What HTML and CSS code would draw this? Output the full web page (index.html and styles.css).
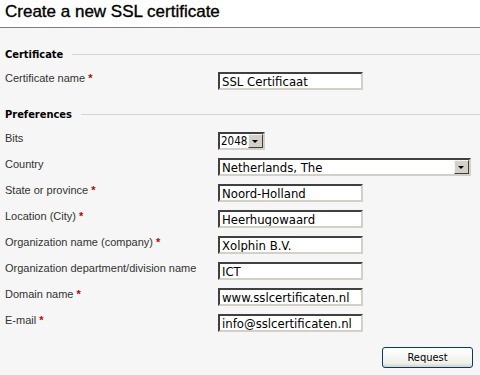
FILE: index.html
```html
<!DOCTYPE html>
<html lang="en">
<head>
    <meta charset="UTF-8">
    <meta name="viewport" content="width=device-width, initial-scale=1.0">
    <title>Create a new SSL certificate</title>
    <link rel="stylesheet" href="styles.css">
</head>
<body>
    <div class="header">
        <h1>Create a new SSL certificate</h1>
    </div>

    <form class="content">
        <div class="legend"><span>Certificate</span></div>
        <div class="row">
            <label>Certificate name <em>*</em></label>
            <input class="text" type="text" value="SSL Certificaat">
        </div>

        <div class="legend"><span>Preferences</span></div>
        <div class="row">
            <label>Bits</label>
            <div class="select small"><span>2048</span><i></i></div>
        </div>
        <div class="row">
            <label>Country</label>
            <div class="select wide"><span>Netherlands, The</span><i></i></div>
        </div>
        <div class="row">
            <label>State or province <em>*</em></label>
            <input class="text" type="text" value="Noord-Holland">
        </div>
        <div class="row">
            <label>Location (City) <em>*</em></label>
            <input class="text" type="text" value="Heerhugowaard">
        </div>
        <div class="row">
            <label>Organization name (company) <em>*</em></label>
            <input class="text" type="text" value="Xolphin B.V.">
        </div>
        <div class="row">
            <label>Organization department/division name</label>
            <input class="text" type="text" value="ICT">
        </div>
        <div class="row">
            <label>Domain name <em>*</em></label>
            <input class="text" type="text" value="www.sslcertificaten.nl">
        </div>
        <div class="row">
            <label>E-mail <em>*</em></label>
            <input class="text" type="text" value="info@sslcertificaten.nl">
        </div>

        <div class="actions">
            <button type="button">Request</button>
        </div>
    </form>
</body>
</html>
```

FILE: styles.css
```css
body {
    margin: 0;
    background-color: #f6f6f6;
    font-family: "Liberation Sans", sans-serif;
    font-size: 11px;
    color: #222;
}

.header {
    background: white;
    height: 27px;
    border-bottom: 1px solid #7f7f7f;
}

h1 {
    margin: 0;
    padding: 2px 0 0 5px;
    font-family: "Liberation Sans", sans-serif;
    font-size: 17px;
    font-weight: normal;
    color: #000;
    -webkit-text-stroke: 0.35px #000;
}

.content {
    padding: 19px 0 0 5px;
}

.legend {
    display: flex;
    align-items: center;
    gap: 9px;
    height: 14px;
    font-family: "DejaVu Sans Condensed", "DejaVu Sans", sans-serif;
    font-size: 11px;
    font-weight: bold;
    color: #000;
}

.legend::after {
    content: "";
    flex: 1;
    border-top: 1px solid #d4d4d4;
}

.row {
    display: flex;
    height: 26px;
}

.legend + .row {
    margin-top: 11px;
}

.row + .legend {
    margin-top: 9px;
}

label {
    width: 213px;
    color: #333;
    line-height: 13px;
}

em {
    font-style: normal;
    color: #c00000;
    font-weight: bold;
}

.text {
    box-sizing: border-box;
    width: 145px;
    height: 18px;
    margin: 0;
    padding: 0 2px;
    background: white;
    border: 2px solid;
    border-color: #404040 #d4d0c8 #d4d0c8 #404040;
    font-family: "DejaVu Sans Condensed", "DejaVu Sans", sans-serif;
    font-size: 13px;
    color: #000;
    outline: none;
}

.select {
    box-sizing: border-box;
    display: flex;
    align-items: center;
    height: 18px;
    background: white;
    border: 2px solid;
    border-color: #404040 #d4d0c8 #d4d0c8 #404040;
    font-family: "DejaVu Sans Condensed", "DejaVu Sans", sans-serif;
    font-size: 13px;
    color: #000;
}

.select span {
    flex: 1;
    padding-left: 2px;
}

.small span {
    padding-left: 1px;
    font-size: 11.5px;
}

.select i {
    position: relative;
    width: 15px;
    height: 14px;
    box-sizing: border-box;
    background: #d4d0c8;
    border: 1px solid;
    border-color: #f4f4f4 #404040 #404040 #f4f4f4;
}

.select i::after {
    content: "";
    position: absolute;
    left: 3px;
    top: 5px;
    border-left: 3.5px solid transparent;
    border-right: 3.5px solid transparent;
    border-top: 3.5px solid #000;
}

.small {
    width: 47px;
}

.wide {
    width: 253px;
}

.actions {
    display: flex;
    justify-content: flex-end;
    padding: 7px 7px 0 0;
}

button {
    width: 91px;
    height: 21px;
    border: 1px solid #003c74;
    border-radius: 3px;
    background: linear-gradient(#ffffff, #f0f0ea 80%, #d6d0c5);
    font-family: "DejaVu Sans Condensed", "DejaVu Sans", sans-serif;
    font-size: 11px;
    color: #000;
    padding: 0;
}
```
